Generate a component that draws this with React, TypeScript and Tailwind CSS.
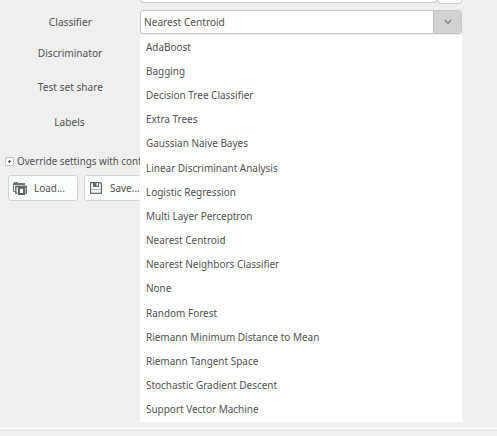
import React from "react";

const classifiers = [
  "AdaBoost",
  "Bagging",
  "Decision Tree Classifier",
  "Extra Trees",
  "Gaussian Naive Bayes",
  "Linear Discriminant Analysis",
  "Logistic Regression",
  "Multi Layer Perceptron",
  "Nearest Centroid",
  "Nearest Neighbors Classifier",
  "None",
  "Random Forest",
  "Riemann Minimum Distance to Mean",
  "Riemann Tangent Space",
  "Stochastic Gradient Descent",
  "Support Vector Machine",
];

function LoadIcon() {
  return (
    <svg width="14" height="14" viewBox="0 0 14 14" fill="none" className="shrink-0">
      <path d="M0 2h1V1h4v1h7v2H0z" fill="#747575" />
      <path d="M.5 3v7.5H2" stroke="#747575" />
      <path d="M2 4.5h12v2H2z" fill="#747575" />
      <path d="M2.8 6v6.3H4.5M13.3 6v6.3h-1" stroke="#747575" strokeWidth="1.5" />
      <path d="M6 6.9h5v6.1H6z" fill="#fcfdfd" stroke="#5c5d5d" strokeWidth="1.9" />
    </svg>
  );
}

function SaveIcon() {
  return (
    <svg width="12" height="12" viewBox="0 0 12 12" fill="none" className="shrink-0">
      <path d="M.6.6h9.6l1.2 1.2v9.6H.6z" stroke="#646565" strokeWidth="1.2" />
      <path d="M3 0h6v5H3z" fill="#646565" />
      <path d="M6.5 1H8v3H6.5z" fill="#fcfdfd" />
      <path d="M1 7.5h10" stroke="#b5b6b6" />
    </svg>
  );
}

function Label({ className, children }: { className: string; children: React.ReactNode }) {
  return (
    <div className={`flex w-[140px] items-center justify-center ${className}`}>
      <span className="scale-x-[0.92]">{children}</span>
    </div>
  );
}

function Text({ children }: { children: React.ReactNode }) {
  return <span className="origin-left scale-x-[0.905]">{children}</span>;
}

export default function App() {
  return (
    <div className="relative flex h-[436px] w-[497px] flex-col overflow-hidden bg-[#efefef] font-['Noto_Sans',sans-serif] text-[11px] leading-4 whitespace-nowrap text-[#505152]">
      <div className="flex h-[3px] gap-[1px] pl-[140px]">
        <div className="w-[297px] rounded-b-[3px] border border-t-0 border-[#cdcdcd] bg-white" />
        <div className="h-[4px] w-[24px] rounded-b-[3px] border border-t-0 border-[#cdcdcd] bg-white" />
      </div>

      <div className="mt-[7px] flex h-[25px]">
        <Label className="h-[24px]">Classifier</Label>
        <div className="flex h-[24px] w-[322px] overflow-hidden rounded-[3px] border border-[#c8c8c8] bg-white">
          <div className="flex h-[22px] flex-1 items-center pl-[3px]">
            <span className="origin-left scale-x-[0.92]">Nearest Centroid</span>
          </div>
          <div className="flex w-[28px] items-center justify-center border-l border-[#bdbdbd] bg-[#d2d2d2]">
            <svg width="8" height="6" viewBox="0 0 8 6" fill="none">
              <path d="M.7 1 4 4.3 7.3 1" stroke="#8c8c8c" strokeWidth="1.7" />
            </svg>
          </div>
        </div>
      </div>
      <Label className="mt-[10px] h-4">Discriminator</Label>
      <Label className="mt-[18px] h-4">Test set share</Label>
      <Label className="mt-[19px] h-4">Labels</Label>

      <div className="mt-[23px] flex h-4 items-center pl-[5px]">
        <svg width="9" height="9" viewBox="0 0 9 9" fill="none">
          <path d="M.5.5h8v8h-8z" fill="#fafafa" stroke="#c6c6c6" />
          <path d="M3 4.5h3M4.5 3v3" stroke="#505050" />
        </svg>
        <span className="ml-[3px] origin-left scale-x-[0.89]">Override settings with conf</span>
      </div>

      <div className="mt-[6px] flex h-[26px] gap-[6px] pl-[8px]">
        <button className="flex w-[70px] items-center rounded-[3px] border border-[#d4d4d4] bg-[#fcfdfd] pl-[4px]">
          <LoadIcon />
          <span className="ml-[7px] flex">
            <Text>Load...</Text>
          </span>
        </button>
        <button className="flex w-[70px] items-center rounded-[3px] border border-[#d4d4d4] bg-[#fcfdfd] pl-[5px]">
          <SaveIcon />
          <span className="ml-[8px] flex">
            <Text>Save...</Text>
          </span>
        </button>
      </div>

      <div className="mt-auto h-[8px] border-t border-white">
        <div className="h-[2px] bg-[#e8e8e8]" />
      </div>

      <ul className="absolute top-[34.5px] left-[140px] h-[387.4px] w-[323px] border-r border-[#f5f5f5] bg-white">
        {classifiers.map((name) => (
          <li key={name} className="flex h-[24.2px] items-center pl-[6px]">
            <Text>{name}</Text>
          </li>
        ))}
      </ul>
    </div>
  );
}
